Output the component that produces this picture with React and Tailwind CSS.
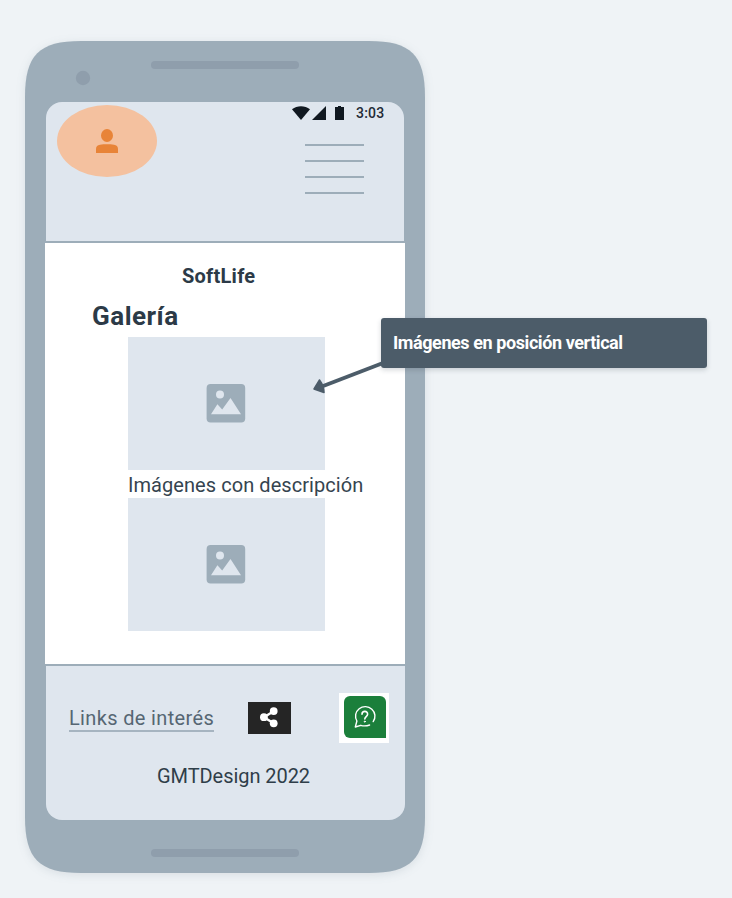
function PhoneFrame() {
  return (
    <svg
      className="absolute inset-0 drop-shadow-[0_2px_5px_rgba(60,80,95,0.12)]"
      width="400"
      height="832"
      viewBox="0 0 400 832"
    >
      <path
        fill="#9dadb9"
        d="M0 56C0 14 14 0 56 0H344C386 0 400 14 400 56V776C400 818 386 832 344 832H56C14 832 0 818 0 776Z"
      />
      <circle cx="58" cy="37" r="7.2" fill="#8f9eac" />
    </svg>
  );
}

function StatusBar() {
  return (
    <div className="flex h-[22px] items-center pl-[246px]">
      <svg className="shrink-0" width="54" height="16" viewBox="0 0 54 16" fill="#101820">
        <path d="M0 4.2C5.2 .1 12.8 .1 18 4.2L9 15Z" />
        <path d="M20 15L34 1V15Z" />
        <path d="M43 2h3V1h3v1h3V15h-9Z" />
      </svg>
      <span className="ml-[10px] whitespace-nowrap text-[14px] font-medium leading-4 tracking-[0.2px] text-[#232b36]">
        3:03
      </span>
    </div>
  );
}

function Avatar() {
  return (
    <div className="flex h-[72px] w-[100px] items-center justify-center rounded-[50%] bg-[#f4c19f]">
      <svg width="22" height="24" viewBox="0 0 22 24" fill="#e88438">
        <ellipse cx="11" cy="6.5" rx="6" ry="6.5" />
        <path d="M0 24V20C0 17.5 1.5 16 4 15.7C8.5 15.1 13.5 15.1 18 15.7C20.500 16 22 17.5 22 20V24Z" />
      </svg>
    </div>
  );
}

function MenuLines() {
  return (
    <div className="flex w-[59px] flex-col gap-[14px]">
      {[0, 1, 2, 3].map((i) => (
        <div key={i} className="h-[2px] bg-[#9dadb9]" />
      ))}
    </div>
  );
}

function ImagePlaceholder() {
  return (
    <div className="ml-[83px] flex h-[133px] w-[197px] items-center justify-center bg-[#dfe6ee] pr-px">
      <svg width="40" height="39" viewBox="0 0 40 39">
        <rect x="0.6" y="0" width="38.6" height="38.6" rx="4" fill="#9dadb9" />
        <circle cx="14" cy="10.600" r="4" fill="#dfe6ee" />
        <path d="M5 30.200L11.400 20.200L16.200 25.400L24.500 14L35 30.200Z" fill="#dfe6ee" />
      </svg>
    </div>
  );
}

function ShareIcon() {
  return (
    <div className="h-8 w-[43px] bg-[#252525]">
      <svg width="43" height="32" viewBox="0 0 43 32" fill="#fff">
        <path d="M25.700 9.200L15.900 15.200L25.700 21.200" fill="none" stroke="#fff" strokeWidth="2.400" />
        <circle cx="25.700" cy="9.100" r="3.900" />
        <circle cx="15.900" cy="15.200" r="3.900" />
        <circle cx="25.700" cy="21.300" r="3.900" />
      </svg>
    </div>
  );
}

function HelpIcon() {
  return (
    <div className="h-[50px] w-[50px] bg-white pl-[5px] pt-[3px]">
      <div className="h-[42px] w-[42px] rounded-[6px] rounded-br-none bg-[#1b7f3b]">
        <svg
          width="42"
          height="42"
          viewBox="0 0 42 42"
          fill="none"
          stroke="#fff"
          strokeWidth="1.4"
          strokeLinecap="round"
          strokeLinejoin="round"
        >
          <path d="M29.200 25.600A9.700 9.500 0 1 0 12.900 25L11.300 31L16.800 29.300Q21 30.600 25.600 29" />
          <path d="M18 18.300C18 14.400 23.800 14.400 23.600 18.200C23.500 20.600 20.800 20.500 20.800 23" strokeWidth="1.6" />
          <circle cx="20.8" cy="25.6" r="0.6" fill="#fff" strokeWidth="0.8" />
        </svg>
      </div>
    </div>
  );
}

function Callout() {
  return (
    <div className="absolute left-[381px] top-[318px] flex h-[50px] w-[326px] items-center rounded-[3px] bg-[#4c5c69] pl-3 shadow-[0_2px_5px_rgba(40,55,70,0.2)]">
      <span className="whitespace-nowrap text-[18px] font-bold leading-6 tracking-[-0.42px] text-white">
        Imágenes en posición vertical
      </span>
    </div>
  );
}

export default function App() {
  return (
    <div className="relative h-[898px] w-[732px] overflow-hidden bg-[#eff3f6] pl-[25px] pt-[41px] font-['Roboto','Liberation_Sans',sans-serif]">
      <div className="relative h-[832px] w-[400px]">
        <PhoneFrame />
        <div className="relative flex h-full flex-col">
          <div className="flex h-[61px] justify-center pt-5">
            <div className="h-2 w-[148px] rounded-full bg-[#8f9eac]" />
          </div>

          <div className="ml-[21px] h-[139px] w-[358px] rounded-t-[16px] bg-[#dfe6ee]">
            <StatusBar />
            <div className="-mt-[19px] flex items-start pl-[11px]">
              <Avatar />
              <div className="ml-[148px] mt-[39px]">
                <MenuLines />
              </div>
            </div>
          </div>

          <div className="ml-5 mt-[2px] h-[421px] w-[360px] bg-white pt-[21px]">
            <h1 className="ml-[137px] whitespace-nowrap text-[20px] font-bold leading-6 tracking-[0.25px] text-[#2c3a47]">
              SoftLife
            </h1>
            <h2 className="ml-[47px] mt-3 h-[37px] whitespace-nowrap text-[26px] font-bold leading-8 tracking-[0.5px] text-[#2c3a47]">
              Galería
            </h2>
            <ImagePlaceholder />
            <p className="ml-[83px] h-7 whitespace-nowrap text-[20px] leading-[30px] tracking-[0.06px] text-[#35444f]">
              Imágenes con descripción
            </p>
            <ImagePlaceholder />
          </div>

          <div className="ml-[21px] mt-[2px] h-[154px] w-[359px] rounded-b-[16px] bg-[#dfe6ee] pt-[27px]">
            <div className="flex h-[50px] items-start">
              <div className="ml-[23px] mt-[10px] h-[29px] w-[145px] border-b-2 border-[#a6b4c0]">
                <a className="block whitespace-nowrap text-[20px] leading-[30px] tracking-[0.35px] text-[#566673]">
                  Links de interés
                </a>
              </div>
              <div className="ml-[34px] mt-[9px]">
                <ShareIcon />
              </div>
              <div className="ml-12">
                <HelpIcon />
              </div>
            </div>
            <p className="ml-[111px] mt-[21px] whitespace-nowrap text-[20px] leading-6 tracking-[-0.06px] text-[#2f3e49]">
              GMTDesign 2022
            </p>
          </div>
          <div className="flex justify-center pt-[29px]">
            <div className="h-2 w-[148px] rounded-full bg-[#8f9eac]" />
          </div>
        </div>
      </div>

      <Callout />
      <svg className="absolute left-[310px] top-[358px]" width="76" height="38" viewBox="0 0 76 38">
        <path d="M8 30L73 5" stroke="#4c5c69" strokeWidth="4" />
        <path d="M4 31L9.5 22Q14 28 14 34.5Z" fill="#4c5c69" stroke="#4c5c69" strokeWidth="1.5" strokeLinejoin="round" />
      </svg>
    </div>
  );
}
